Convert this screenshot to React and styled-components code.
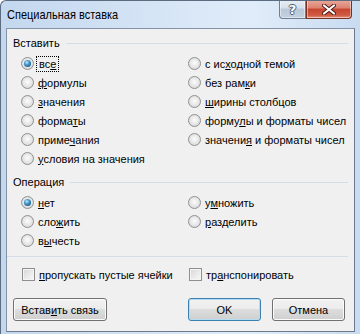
import React from 'react';
import styled, { createGlobalStyle } from 'styled-components';

const GlobalStyle = createGlobalStyle`
  html, body { margin: 0; padding: 0; background: #fff; }
  body { font-family: "Liberation Sans", Arial, sans-serif; font-size: 11px; color: #000; }
`;

const Window = styled.div`
  width: 360px;
  height: 334px;
  box-sizing: border-box;
  overflow: hidden;
  border-left: 1px solid #5b6b80;
  border-top: 1px solid #5b6b80;
  border-top-left-radius: 6px;
  background: linear-gradient(to right, #c3d7ee 0%, #d6e5f6 45%, #e0ecf9 70%, #c8dbf1 100%);
  display: flex;
  flex-direction: column;
`;

const TitleBar = styled.div`
  height: 27px;
  display: flex;
  align-items: flex-start;
  padding-left: 6px;
`;

const Title = styled.div`
  font-size: 11px;
  line-height: 28px;
  color: #000;
  transform: scaleY(1.08);
`;

const CaptionButtons = styled.div`
  margin-left: auto;
  margin-right: 8px;
  margin-top: -1px;
  display: flex;
`;

const CaptionButton = styled.div`
  height: 19px;
  width: ${p => p.$w}px;
  box-sizing: border-box;
  display: flex;
  align-items: center;
  justify-content: center;
  border: 1px solid ${p => (p.$close ? '#7a2f25' : '#6d7f95')};
  border-top: none;
  background: ${p => (p.$close
    ? 'linear-gradient(to bottom, #e9a99b 0%, #dc8270 45%, #c6452f 50%, #d05a42 85%, #e39a80 100%)'
    : 'linear-gradient(to bottom, #e8eef5 0%, #d6e0ea 45%, #b9c8d8 50%, #c3d1df 100%)')};
  border-radius: ${p => (p.$close ? '0 0 4px 0' : '0 0 0 4px')};
  box-shadow: inset 0 0 0 1px rgba(255, 255, 255, 0.45);
`;

const HelpGlyph = styled.span`
  font-family: "DejaVu Sans", sans-serif;
  font-weight: bold;
  font-size: 13px;
  color: #fff;
  text-shadow: 1px 0 0 #4a5a6e, -1px 0 0 #4a5a6e, 0 1px 0 #4a5a6e, 0 -1px 0 #4a5a6e;
  line-height: 1;
`;

const Client = styled.div`
  margin-left: 5px;
  width: 349px;
  height: 304px;
  box-sizing: border-box;
  border: 1px solid #8493a6;
  border-right-color: #6c7a8c;
  border-bottom-color: #6c7a8c;
  background: #f0f0f0;
  padding: 6px 6px 0 6px;
  display: flex;
  flex-direction: column;
`;

const GroupHeader = styled.div`
  display: flex;
  align-items: center;
  gap: 6px;
  line-height: 16px;
  margin-top: ${p => p.$top || 0}px;

  &::after {
    content: '';
    flex: 1;
    height: 1px;
    background: #d3dde7;
  }
`;

const OptionGrid = styled.div`
  display: grid;
  grid-template-columns: 167px 1fr;
  grid-auto-flow: column;
  grid-template-rows: repeat(${p => p.$rows}, 19px);
  padding-left: 8px;
  margin-top: ${p => p.$top || 0}px;
`;

const Option = styled.label`
  display: flex;
  align-items: center;
  gap: 4px;
  white-space: nowrap;
`;

const RadioCircle = styled.span`
  width: 13px;
  height: 13px;
  box-sizing: border-box;
  border-radius: 50%;
  border: 1px solid #8f9090;
  background: radial-gradient(circle at 50% 45%, #fdfdfd 0%, #e9e9e9 45%, #cfcfcf 100%);
  display: flex;
  align-items: center;
  justify-content: center;
  flex-shrink: 0;

  &::after {
    content: '';
    display: ${p => (p.$checked ? 'block' : 'none')};
    width: 7px;
    height: 7px;
    border-radius: 50%;
    background: radial-gradient(circle at 40% 35%, #c8ecff 0%, #4a9fd4 35%, #1f5f8c 75%, #143f60 100%);
  }
`;

const CheckBox = styled.span`
  width: 13px;
  height: 13px;
  box-sizing: border-box;
  border: 1px solid #8f8f8f;
  background: linear-gradient(135deg, #d6d6d6 0%, #ececec 60%, #f8f8f8 100%);
  box-shadow: inset 0 0 0 1px #f4f4f4;
  flex-shrink: 0;
`;

const Focus = styled.span`
  outline: 1px dotted #000;
  outline-offset: 1px;
  padding: 0 1px;
`;

const Separator = styled.div`
  height: 1px;
  background: #d3dde7;
  margin: 6px 0 0 -6px;
`;

const CheckRow = styled.div`
  display: grid;
  grid-template-columns: 167px 1fr;
  height: 19px;
  padding-left: 9px;
  margin-top: 8px;
`;

const ButtonRow = styled.div`
  display: flex;
  margin-top: 14px;
`;

const Button = styled.div`
  width: ${p => p.$w}px;
  height: 23px;
  box-sizing: border-box;
  margin-left: ${p => p.$ml || 0}px;
  display: flex;
  align-items: center;
  justify-content: center;
  border: 1px solid ${p => (p.$default ? '#3c7fb1' : '#707070')};
  border-radius: 3px;
  background: linear-gradient(to bottom, #f2f2f2 0%, #ebebeb 49%, #dddddd 50%, #cfcfcf 100%);
  box-shadow: inset 0 0 0 1px ${p => (p.$default ? '#b4dcf5' : '#fbfbfb')};
`;

const Caption = ({ text, at }) => (
  <span>
    {text.slice(0, at)}
    <u>{text[at]}</u>
    {text.slice(at + 1)}
  </span>
);

const pasteOptions = [
  { text: 'все', at: 2, checked: true, focus: true },
  { text: 'формулы', at: 0 },
  { text: 'значения', at: 0 },
  { text: 'форматы', at: 5 },
  { text: 'примечания', at: 5 },
  { text: 'условия на значения', at: 0 },
  { text: 'с исходной темой', at: 4 },
  { text: 'без рамки', at: 7 },
  { text: 'ширины столбцов', at: 0 },
  { text: 'формулы и форматы чисел', at: 5 },
  { text: 'значения и форматы чисел', at: 7 },
];

const operationOptions = [
  { text: 'нет', at: 0, checked: true },
  { text: 'сложить', at: 3 },
  { text: 'вычесть', at: 1 },
  { text: 'умножить', at: 1 },
  { text: 'разделить', at: 0 },
];

const RadioOption = ({ opt }) => (
  <Option>
    <RadioCircle $checked={opt.checked} />
    {opt.focus ? (
      <Focus><Caption text={opt.text} at={opt.at} /></Focus>
    ) : (
      <Caption text={opt.text} at={opt.at} />
    )}
  </Option>
);

export default function App() {
  return (
    <>
      <GlobalStyle />
      <Window>
        <TitleBar>
          <Title>Специальная вставка</Title>
          <CaptionButtons>
            <CaptionButton $w={27}>
              <HelpGlyph>?</HelpGlyph>
            </CaptionButton>
            <CaptionButton $w={46} $close>
              <svg width="14" height="11" viewBox="0 0 14 11">
                <path d="M2 1.5 L12 9.5 M12 1.5 L2 9.5" stroke="#4b1a14" strokeWidth="4" strokeLinecap="round" />
                <path d="M2 1.5 L12 9.5 M12 1.5 L2 9.5" stroke="#fff" strokeWidth="2.2" strokeLinecap="round" />
              </svg>
            </CaptionButton>
          </CaptionButtons>
        </TitleBar>
        <Client>
          <GroupHeader>Вставить</GroupHeader>
          <OptionGrid $rows={6} $top={3}>
            {pasteOptions.map(opt => <RadioOption key={opt.text} opt={opt} />)}
          </OptionGrid>
          <GroupHeader $top={6}>Операция</GroupHeader>
          <OptionGrid $rows={3} $top={3}>
            {operationOptions.map(opt => <RadioOption key={opt.text} opt={opt} />)}
          </OptionGrid>
          <Separator />
          <CheckRow>
            <Option>
              <CheckBox />
              <Caption text="пропускать пустые ячейки" at={0} />
            </Option>
            <Option>
              <CheckBox />
              <Caption text="транспонировать" at={2} />
            </Option>
          </CheckRow>
          <ButtonRow>
            <Button $w={94}><Caption text="Вставить связь" at={5} /></Button>
            <Button $w={73} $ml={81} $default>OK</Button>
            <Button $w={73} $ml={11}>Отмена</Button>
          </ButtonRow>
        </Client>
      </Window>
    </>
  );
}
